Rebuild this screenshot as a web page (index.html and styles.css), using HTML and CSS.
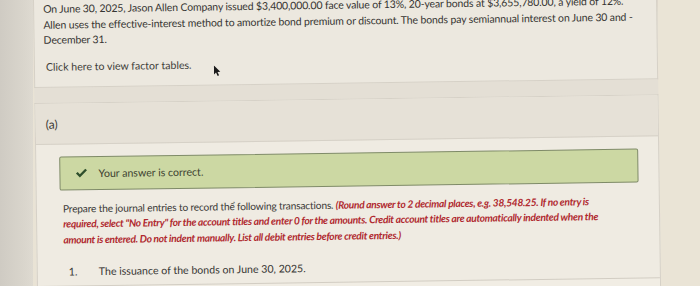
FILE: index.html
```html
<!DOCTYPE html>
<html lang="en">
<head>
<meta charset="utf-8">
<title>Question</title>
<link rel="stylesheet" href="styles.css">
</head>
<body>
<div class="page">
  <div class="gutter"></div>
  <div class="main">
    <section class="card card-intro">
      <p class="intro">On June 30, 2025, Jason Allen Company issued $3,400,000.00 face value of 13%, 20-year bonds at $3,655,780.00, a yield of 12%.<br>Allen uses the effective-interest method to amortize bond premium or discount. The bonds pay semiannual interest on June 30 and -<br>December 31.</p>
      <p class="link-line"><span class="link">Click here to view factor tables.</span><span class="cursor"><svg width="8" height="11" viewBox="0 0 8 11"><path d="M1 0 L1 9 L3 7 L4.6 10.5 L6 9.8 L4.5 6.5 L7.3 6.3 Z" fill="#1a1a1a"/></svg></span></p>
    </section>
    <section class="card card-part">
      <header class="part-head">(a)</header>
      <div class="part-body">
        <div class="correct">
          <svg class="check" width="12" height="10" viewBox="0 0 12 10"><path d="M0.5 5.2 L2.3 3.6 L4.4 5.9 L9.9 0.4 L11.6 2 L4.4 9.2 Z" fill="#2e4f2c"/></svg>
          <span class="correct-text">Your answer is correct.</span>
        </div>
        <p class="instructions">Prepare the journal entries to record thể following transactions. <em class="note">(Round answer to 2 decimal places, e.g. 38,548.25. If no entry is<br>required, select "No Entry" for the account titles and enter 0 for the amounts. Credit account titles are automatically indented when the<br>amount is entered. Do not indent manually. List all debit entries before credit entries.)</em></p>
        <ol class="items">
          <li class="item"><span class="num">1.</span><span>The issuance of the bonds on June 30, 2025.</span></li>
        </ol>
        <div class="table-head">
          <span class="th-spacer"></span><span class="th">Interest expense on December 31, 2025</span>
        </div>
      </div>
    </section>
  </div>
  <div class="aside"></div>
</div>
</body>
</html>
```
FILE: styles.css
```css
html, body {
  margin: 0;
  padding: 0;
}
body {
  width: 700px;
  height: 286px;
  overflow: hidden;
  background: #e9e3d5;
  font-family: Lato, "Open Sans", sans-serif;
  color: #363532;
}
.page {
  display: flex;
  height: 286px;
}
.gutter {
  width: 33px;
  flex: none;
  background: linear-gradient(90deg, #cfcbc3 0%, #d9d5cc 70%, #dedad1 100%);
}
.main {
  width: 624px;
  flex: none;
  background: #e4dfd5;
  transform: rotate(-0.8deg);
  transform-origin: 0 0;
}
.aside {
  flex: 1;
  background: #eae4d6;
  border-left: 1px solid #dcd6c9;
}
.card {
  background: #ece8df;
  border: 1px solid #d6d1c7;
}
.card-intro {
  border-top: none;
  padding: 2px 10px 8px 9px;
}
.intro {
  margin: 0;
  font-size: 10.5px;
  line-height: 15.5px;
  letter-spacing: -0.14px;
}
.link-line {
  margin: 11px 0 0 2px;
  font-size: 10.6px;
  line-height: 15.5px;
  display: flex;
  align-items: flex-start;
}
.link {
  color: #3d3c38;
}
.cursor {
  margin: 8px 0 0 21px;
  display: flex;
}
.card-part {
  margin-top: 15px;
  border-bottom: none;
  background: #efebe2;
}
.part-head {
  background: #e6e1d7;
  border-bottom: 1px solid #d6d1c7;
  height: 41px;
  box-sizing: border-box;
  padding: 14px 0 0 10px;
  font-size: 12px;
  line-height: 14px;
  color: #3b3a36;
}
.part-body {
  padding: 12px 20px 0 23px;
}
.correct {
  height: 34px;
  box-sizing: border-box;
  background: #ccd8a3;
  border: 1px solid #7f8b68;
  border-radius: 2px;
  display: flex;
  align-items: center;
  padding-left: 15px;
}
.check {
  flex: none;
}
.correct-text {
  margin-left: 11px;
  font-size: 10.6px;
  color: #3b3e2f;
}
.instructions {
  margin: 11px 0 0 3px;
  font-size: 10.2px;
  line-height: 15.5px;
  letter-spacing: -0.18px;
  color: #3a3936;
}
.note {
  font-weight: 700;
  font-style: italic;
  color: #b0292f;
  letter-spacing: -0.3px;
}
.items {
  list-style: none;
  margin: 17px 0 0 0;
  padding: 0;
}
.item {
  display: flex;
  font-size: 10.6px;
  line-height: 15.5px;
}
.num {
  width: 30px;
  padding-left: 8px;
  flex: none;
}
.table-head {
  margin-top: 5px;
  margin-left: -23px;
  margin-right: -20px;
  border-top: 1px solid #d2cdc3;
  background: #f1ede4;
  padding-top: 3px;
  display: flex;
  font-size: 10.6px;
  line-height: 14px;
}
.th-spacer {
  width: 250px;
  flex: none;
}
```
